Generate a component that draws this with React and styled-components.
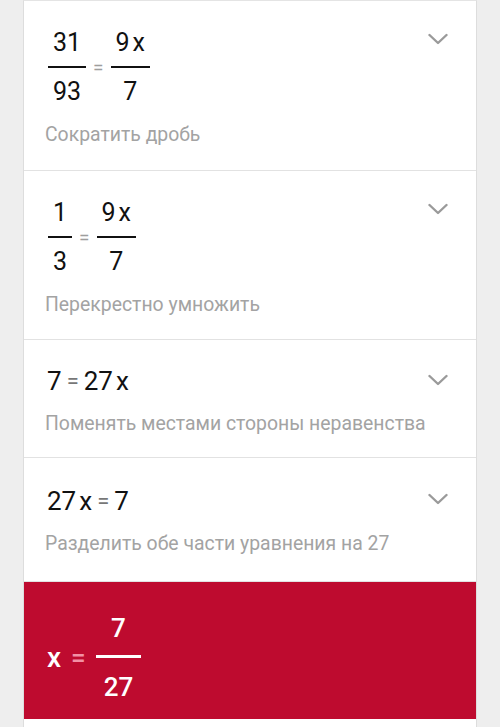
import React from "react";
import styled, { createGlobalStyle } from "styled-components";

const GlobalStyle = createGlobalStyle`
  html, body {
    margin: 0;
    padding: 0;
    background: #eeeeee;
  }
  body {
    font-family: Roboto, "Noto Sans", "Liberation Sans", sans-serif;
  }
`;

const Page = styled.div`
  min-height: 727px;
  background: #eeeeee;
  padding: 0 23px;
`;

const Card = styled.div`
  background: #ffffff;
  border-left: 1px solid #dddddd;
  border-right: 1px solid #dddddd;
  border-top: 1px solid #e4e4e4;
  min-height: 726px;
  display: flex;
  flex-direction: column;
`;

const Step = styled.div`
  padding: ${(p) => p.$pad || "28px 28px 22px 21px"};
  border-bottom: 1px solid #e2e2e2;
  display: flex;
  flex-direction: column;
  gap: ${(p) => p.$gap || "17px"};
`;

const Head = styled.div`
  display: flex;
  justify-content: space-between;
  align-items: flex-start;
`;

const MathRow = styled.div`
  display: flex;
  align-items: center;
  margin-left: ${(p) => p.$indent || "3px"};
  color: #111111;
  font-size: ${(p) => p.$size || "25px"};
  line-height: ${(p) => p.$line || "28px"};
`;

const Frac = styled.div`
  display: inline-flex;
  flex-direction: column;
  align-items: center;
  padding: 0 ${(p) => p.$pad || "5px"};
`;

const Bar = styled.div`
  align-self: stretch;
  height: ${(p) => p.$h || "2px"};
  background: ${(p) => p.$color || "#111111"};
  margin: ${(p) => p.$m || "9px -5px 10px"};
`;

const Eq = styled.span`
  color: ${(p) => p.$color || "#9e9e9e"};
  font-size: ${(p) => p.$size || "19px"};
  margin: 0 ${(p) => p.$gap || "7px"};
`;

const Var = styled.span`
  margin-left: ${(p) => p.$lead || "3px"};
  font-size: ${(p) => p.$size || "inherit"};
`;

const Label = styled.div`
  color: #a3a3a3;
  font-size: 19.4px;
  line-height: 24px;
  white-space: nowrap;
`;

const Chevron = styled.svg`
  width: 20px;
  height: 12px;
  margin-top: ${(p) => p.$top || "5px"};
  flex-shrink: 0;
`;

const Answer = styled.div`
  background: #be0b2f;
  color: #ffffff;
  padding: 31px 23px 17px;
  display: flex;
  align-items: center;
  font-size: 26px;
  line-height: 30px;
  font-weight: 500;
`;

const Down = ({ top }) => (
  <Chevron $top={top} viewBox="0 0 20 12">
    <path
      d="M1.5 2 L10 10 L18.5 2"
      fill="none"
      stroke="#9a9a9a"
      strokeWidth="2.4"
      strokeLinecap="round"
      strokeLinejoin="round"
    />
  </Chevron>
);

const Fraction = ({ num, den }) => (
  <Frac>
    <span>{num}</span>
    <Bar />
    <span>{den}</span>
  </Frac>
);

const App = () => (
  <>
    <GlobalStyle />
    <Page>
      <Card>
        <Step $pad="28px 28px 23px 21px">
          <Head>
            <MathRow>
              <Fraction num="31" den="93" />
              <Eq>=</Eq>
              <Fraction
                num={
                  <>
                    9<Var>x</Var>
                  </>
                }
                den="7"
              />
            </MathRow>
            <Down top="4px" />
          </Head>
          <Label>Сократить дробь</Label>
        </Step>

        <Step>
          <Head>
            <MathRow>
              <Fraction num="1" den="3" />
              <Eq>=</Eq>
              <Fraction
                num={
                  <>
                    9<Var>x</Var>
                  </>
                }
                den="7"
              />
            </MathRow>
            <Down top="4px" />
          </Head>
          <Label>Перекрестно умножить</Label>
        </Step>

        <Step $pad="26px 28px 21px 21px" $gap="16px">
          <Head>
            <MathRow $indent="2px" $size="26px" $line="30px">
              7<Eq $color="#777777" $size="22px" $gap="5px">=</Eq>27<Var>x</Var>
            </MathRow>
            <Down top="8px" />
          </Head>
          <Label>Поменять местами стороны неравенства</Label>
        </Step>

        <Step $pad="28px 28px 25px 21px" $gap="16px">
          <Head>
            <MathRow $indent="2px" $size="26px" $line="30px">
              27<Var>x</Var>
              <Eq $color="#777777" $size="22px" $gap="5px">=</Eq>7
            </MathRow>
            <Down top="7px" />
          </Head>
          <Label>Разделить обе части уравнения на 27</Label>
        </Step>

        <Answer>
          <Var $size="28px" $lead="0">x</Var>
          <Eq $color="#f291a5" $size="26px" $gap="10px">=</Eq>
          <Frac $pad="8px">
            <span>7</span>
            <Bar $h="3px" $color="#ffffff" $m="12px -8px 14px" />
            <span>27</span>
          </Frac>
        </Answer>
      </Card>
    </Page>
  </>
);

export default App;
